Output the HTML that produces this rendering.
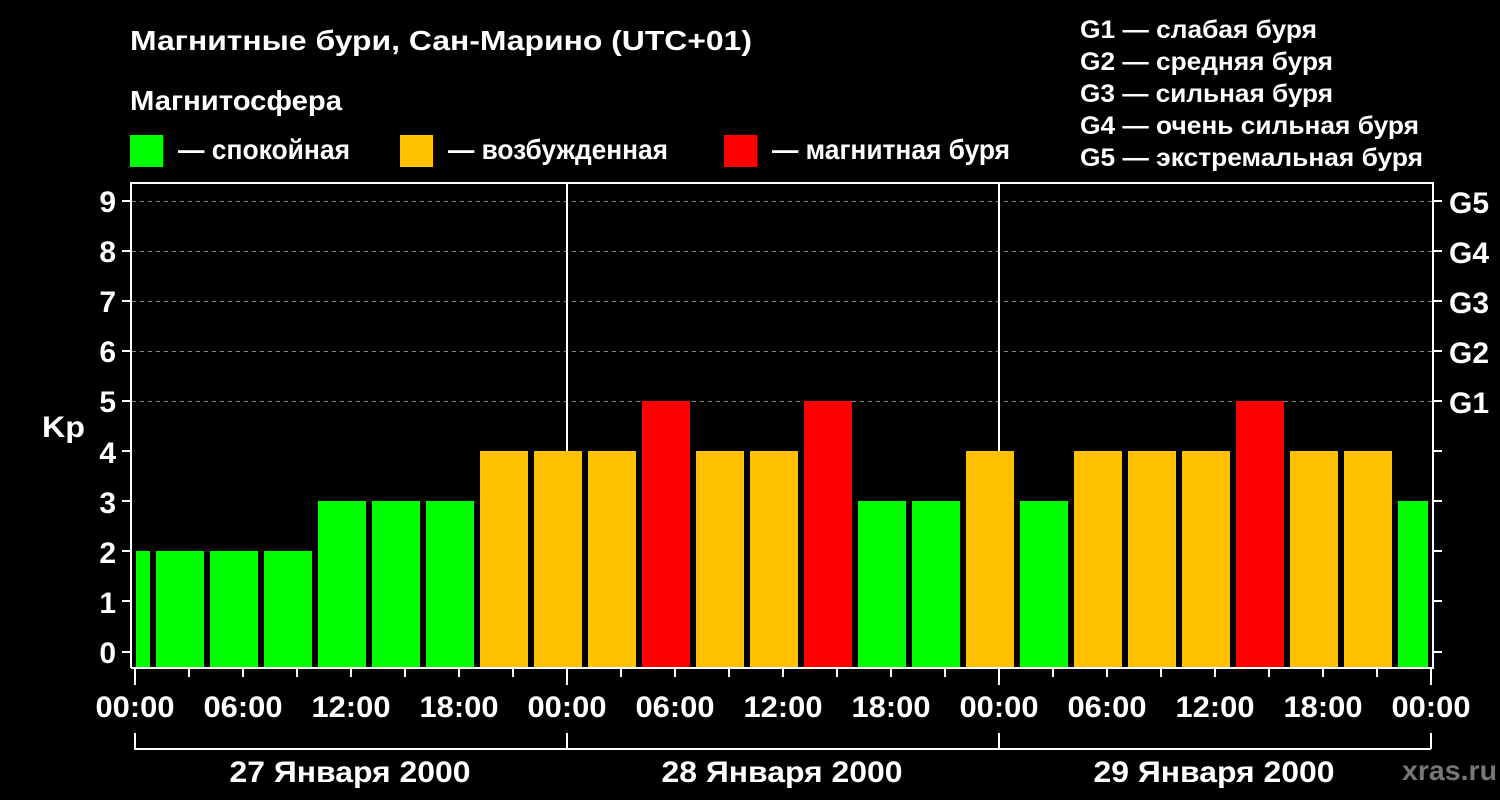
<!DOCTYPE html>
<html><head><meta charset="utf-8"><style>html,body{margin:0;padding:0;background:#000;}svg{display:block}</style></head>
<body>
<svg width="1500" height="800" xmlns="http://www.w3.org/2000/svg" font-family="Liberation Sans, Arial, sans-serif" font-weight="bold" fill="#fff">
<rect width="1500" height="800" fill="#000"/>
<text x="130" y="50" font-size="28" textLength="622" lengthAdjust="spacingAndGlyphs">Магнитные бури, Сан-Марино (UTC+01)</text>
<text x="130" y="110" font-size="28" textLength="212" lengthAdjust="spacingAndGlyphs">Магнитосфера</text>
<rect x="130" y="135" width="33" height="32" fill="#00ff00"/>
<text x="178" y="159" font-size="28" textLength="172" lengthAdjust="spacingAndGlyphs">— спокойная</text>
<rect x="400" y="135" width="33" height="32" fill="#ffc000"/>
<text x="448" y="159" font-size="28" textLength="220" lengthAdjust="spacingAndGlyphs">— возбужденная</text>
<rect x="724" y="135" width="33" height="32" fill="#ff0000"/>
<text x="772" y="159" font-size="28" textLength="238" lengthAdjust="spacingAndGlyphs">— магнитная буря</text>
<g font-size="25">
<text x="1080" y="38" textLength="237" lengthAdjust="spacingAndGlyphs">G1 — слабая буря</text>
<text x="1080" y="70" textLength="253" lengthAdjust="spacingAndGlyphs">G2 — средняя буря</text>
<text x="1080" y="102" textLength="253" lengthAdjust="spacingAndGlyphs">G3 — сильная буря</text>
<text x="1080" y="134" textLength="339" lengthAdjust="spacingAndGlyphs">G4 — очень сильная буря</text>
<text x="1080" y="166" textLength="343" lengthAdjust="spacingAndGlyphs">G5 — экстремальная буря</text>
</g>
<g stroke="#888" stroke-width="1" stroke-dasharray="4,4">
<line x1="132" y1="201.5" x2="1432" y2="201.5"/>
<line x1="132" y1="251.5" x2="1432" y2="251.5"/>
<line x1="132" y1="301.5" x2="1432" y2="301.5"/>
<line x1="132" y1="351.5" x2="1432" y2="351.5"/>
<line x1="132" y1="401.5" x2="1432" y2="401.5"/>
</g>
<rect x="566" y="183" width="2" height="485" fill="#fff"/>
<rect x="998" y="183" width="2" height="485" fill="#fff"/>
<g>
<rect x="136" y="551" width="14" height="117" fill="#00ff00"/>
<rect x="156" y="551" width="48" height="117" fill="#00ff00"/>
<rect x="210" y="551" width="48" height="117" fill="#00ff00"/>
<rect x="264" y="551" width="48" height="117" fill="#00ff00"/>
<rect x="318" y="501" width="48" height="167" fill="#00ff00"/>
<rect x="372" y="501" width="48" height="167" fill="#00ff00"/>
<rect x="426" y="501" width="48" height="167" fill="#00ff00"/>
<rect x="480" y="451" width="48" height="217" fill="#ffc000"/>
<rect x="534" y="451" width="48" height="217" fill="#ffc000"/>
<rect x="588" y="451" width="48" height="217" fill="#ffc000"/>
<rect x="642" y="401" width="48" height="267" fill="#ff0000"/>
<rect x="696" y="451" width="48" height="217" fill="#ffc000"/>
<rect x="750" y="451" width="48" height="217" fill="#ffc000"/>
<rect x="804" y="401" width="48" height="267" fill="#ff0000"/>
<rect x="858" y="501" width="48" height="167" fill="#00ff00"/>
<rect x="912" y="501" width="48" height="167" fill="#00ff00"/>
<rect x="966" y="451" width="48" height="217" fill="#ffc000"/>
<rect x="1020" y="501" width="48" height="167" fill="#00ff00"/>
<rect x="1074" y="451" width="48" height="217" fill="#ffc000"/>
<rect x="1128" y="451" width="48" height="217" fill="#ffc000"/>
<rect x="1182" y="451" width="48" height="217" fill="#ffc000"/>
<rect x="1236" y="401" width="48" height="267" fill="#ff0000"/>
<rect x="1290" y="451" width="48" height="217" fill="#ffc000"/>
<rect x="1344" y="451" width="48" height="217" fill="#ffc000"/>
<rect x="1398" y="501" width="30" height="167" fill="#00ff00"/>
</g>
<g stroke="#fff" stroke-width="2" fill="none">
<polyline points="131,668 131,183 1433,183 1433,668 131,668"/>
<path d="M122 201H131M122 251H131M122 301H131M122 351H131M122 401H131M122 451H131M122 501H131M122 551H131M122 601H131M122 652H131"/>
<path d="M1433 201H1442M1433 251H1442M1433 301H1442M1433 351H1442M1433 401H1442M1433 451H1442M1433 501H1442M1433 551H1442M1433 601H1442M1433 652H1442"/>
<path d="M135 668V685M567 668V685M999 668V685M1431 668V685"/>
<path d="M189 668V677M243 668V677M297 668V677M351 668V677M405 668V677M459 668V677M513 668V677M621 668V677M675 668V677M729 668V677M783 668V677M837 668V677M891 668V677M945 668V677M1053 668V677M1107 668V677M1161 668V677M1215 668V677M1269 668V677M1323 668V677M1377 668V677"/>
<path d="M135 733V749H1431M567 733V749M999 733V749M1431 733V749"/>
</g>
<g font-size="30" text-anchor="end">
<text x="116" y="212">9</text><text x="116" y="262">8</text><text x="116" y="312">7</text><text x="116" y="362">6</text><text x="116" y="412">5</text><text x="116" y="463">4</text><text x="116" y="513">3</text><text x="116" y="563">2</text><text x="116" y="613">1</text><text x="116" y="663">0</text>
</g>
<text x="42" y="437" font-size="30" textLength="43" lengthAdjust="spacingAndGlyphs">Kp</text>
<g font-size="30">
<text x="1449" y="213">G5</text><text x="1449" y="263">G4</text><text x="1449" y="313">G3</text><text x="1449" y="363">G2</text><text x="1449" y="413">G1</text>
</g>
<g font-size="30" text-anchor="middle">
<text x="135" y="717" textLength="79" lengthAdjust="spacingAndGlyphs">00:00</text>
<text x="243" y="717" textLength="79" lengthAdjust="spacingAndGlyphs">06:00</text>
<text x="351" y="717" textLength="79" lengthAdjust="spacingAndGlyphs">12:00</text>
<text x="459" y="717" textLength="79" lengthAdjust="spacingAndGlyphs">18:00</text>
<text x="567" y="717" textLength="79" lengthAdjust="spacingAndGlyphs">00:00</text>
<text x="675" y="717" textLength="79" lengthAdjust="spacingAndGlyphs">06:00</text>
<text x="783" y="717" textLength="79" lengthAdjust="spacingAndGlyphs">12:00</text>
<text x="891" y="717" textLength="79" lengthAdjust="spacingAndGlyphs">18:00</text>
<text x="999" y="717" textLength="79" lengthAdjust="spacingAndGlyphs">00:00</text>
<text x="1107" y="717" textLength="79" lengthAdjust="spacingAndGlyphs">06:00</text>
<text x="1215" y="717" textLength="79" lengthAdjust="spacingAndGlyphs">12:00</text>
<text x="1323" y="717" textLength="79" lengthAdjust="spacingAndGlyphs">18:00</text>
<text x="1431" y="717" textLength="79" lengthAdjust="spacingAndGlyphs">00:00</text>
<text x="350" y="782" textLength="241" lengthAdjust="spacingAndGlyphs">27 Января 2000</text>
<text x="782" y="782" textLength="241" lengthAdjust="spacingAndGlyphs">28 Января 2000</text>
<text x="1214" y="782" textLength="241" lengthAdjust="spacingAndGlyphs">29 Января 2000</text>
</g>
<text x="1402" y="780" font-size="28" fill="#777" textLength="95" lengthAdjust="spacingAndGlyphs">xras.ru</text>
</svg>
</body></html>
